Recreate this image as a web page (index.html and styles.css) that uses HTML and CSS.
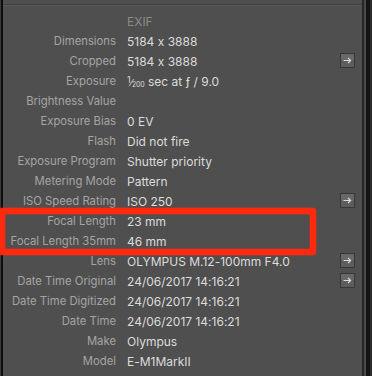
FILE: index.html
```html
<!DOCTYPE html>
<html lang='en-US'>
	<head>
		<title>EXIF</title>
		<meta charset='utf-8'>
		<link rel="stylesheet" href="styles.css">
	</head>
	<body>
		<div class='edge-left'></div>
		<main class='panel'>
			<div class='rule'></div>
			<section class='meta'>
				<div class='row head'><span></span><span class='title'>EXIF</span></div>
				<div class='row'><label>Dimensions</label><span>5184 x 3888</span></div>
				<div class='row'><label>Cropped</label><span>5184 x 3888</span><button class='go'><svg viewBox='0 0 13 13'><path d='M2.5 6.5h7M7 4l2.6 2.5L7 9'/></svg></button></div>
				<div class='row'><label>Exposure</label><span><span class='frac'><sup>1</sup>&frasl;<sub>200</sub></span> sec at ƒ / 9.0</span></div>
				<div class='row'><label>Brightness Value</label><span></span></div>
				<div class='row'><label>Exposure Bias</label><span>0 EV</span></div>
				<div class='row'><label>Flash</label><span>Did not fire</span></div>
				<div class='row'><label>Exposure Program</label><span>Shutter priority</span></div>
				<div class='row'><label>Metering Mode</label><span>Pattern</span></div>
				<div class='row'><label>ISO Speed Rating</label><span>ISO 250</span><button class='go'><svg viewBox='0 0 13 13'><path d='M2.5 6.5h7M7 4l2.6 2.5L7 9'/></svg></button></div>
				<div class='row'><label>Focal Length</label><span>23 mm</span></div>
				<div class='row'><label>Focal Length 35mm</label><span>46 mm</span></div>
				<div class='row'><label>Lens</label><span>OLYMPUS M.12-100mm F4.0</span><button class='go'><svg viewBox='0 0 13 13'><path d='M2.5 6.5h7M7 4l2.6 2.5L7 9'/></svg></button></div>
				<div class='row'><label>Date Time Original</label><span>24/06/2017 14:16:21</span><button class='go'><svg viewBox='0 0 13 13'><path d='M2.5 6.5h7M7 4l2.6 2.5L7 9'/></svg></button></div>
				<div class='row'><label>Date Time Digitized</label><span>24/06/2017 14:16:21</span></div>
				<div class='row'><label>Date Time</label><span>24/06/2017 14:16:21</span></div>
				<div class='row'><label>Make</label><span>Olympus</span></div>
				<div class='row'><label>Model</label><span>E-M1MarkII</span></div>
			</section>
			<div class='highlight'></div>
		</main>
		<div class='edge-right'></div>
	</body>
</html>
```
FILE: styles.css
```css
html,body{
	margin:0;
}

*{
	box-sizing:border-box;
}

body{
	display:flex;
	height:376px;
	overflow:hidden;
	background:#161616;
	font-family:Inter,"Liberation Sans",sans-serif;
	font-size:12px;
	font-feature-settings:"calt" 0;
}

.edge-left{
	width:3px;
	background:linear-gradient(90deg,#3a3a3a 1px,#0e0e0e 1px);
}

.edge-right{
	width:10px;
	background:linear-gradient(90deg,#262626 2px,#4a4a4a 2px,#4a4a4a 4px,#141414 4px,#141414 8px,#2c2c2c 8px);
}

.panel{
	position:relative;
	width:359px;
	background:#4f4f4f;
}

.rule{
	margin-top:4px;
	height:2px;
	background:linear-gradient(#3e3e3e 1px,#5a5a5a 1px);
}

.meta{
	padding:5px 7px 0 0;
}

.row{
	display:grid;
	grid-template-columns:113px 1fr 15px;
	column-gap:11px;
	align-items:center;
	height:20px;
}

.row label{
	text-align:right;
	color:#a5a5a5;
	font-size:11.3px;
	white-space:nowrap;
}

.row span{
	color:#dcdcdc;
	white-space:nowrap;
}

.row .title{
	color:#8a8a8a;
}

.frac{
	font-size:9px;
	letter-spacing:-.2px;
}
.frac sup{
	font-size:9px;
	vertical-align:3px;
}
.frac sub{
	font-size:7px;
	vertical-align:-1px;
}

.go{
	grid-column:3;
	width:15px;
	height:15px;
	padding:0;
	margin-top:-2px;
	border:1px solid #363636;
	background:linear-gradient(#686868 50%,#5d5d5d 50%);
	display:flex;
	align-items:center;
	justify-content:center;
}
.go svg{
	width:13px;
	height:13px;
	fill:none;
	stroke:#dadada;
	stroke-width:1.2;
}

.highlight{
	position:absolute;
	left:-4px;
	top:208px;
	width:317px;
	height:47px;
	border:6px solid #ff2a0e;
	border-radius:3px;
	box-shadow:0 0 2px #ff2a0e,inset 0 0 2px #ff2a0e;
}
```
